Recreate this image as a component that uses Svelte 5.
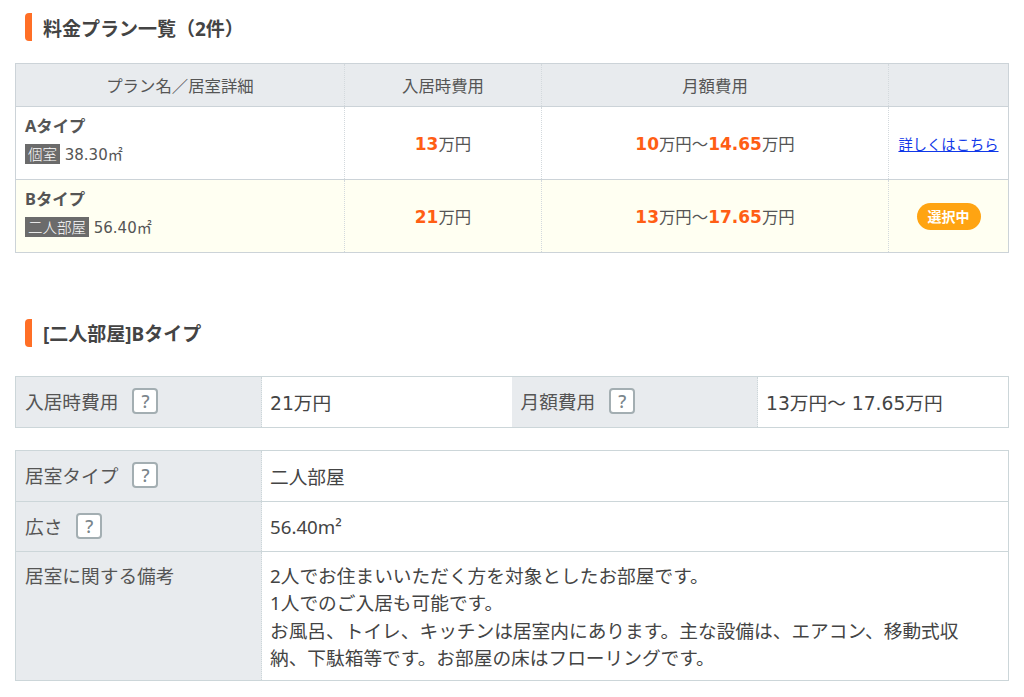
<script>
  const plans = [
    { name: 'Aタイプ', room: '個室', area: '38.30㎡', init: '13', lo: '10', hi: '14.65', sel: false },
    { name: 'Bタイプ', room: '二人部屋', area: '56.40㎡', init: '21', lo: '13', hi: '17.65', sel: true }
  ];
</script>

<main class="page">
  <h2 class="title first">料金プラン一覧（2件）</h2>
  <table class="plans">
    <colgroup><col class="c1" /><col class="c2" /><col class="c3" /><col /></colgroup>
    <thead>
      <tr><th>プラン名／居室詳細</th><th>入居時費用</th><th>月額費用</th><th></th></tr>
    </thead>
    <tbody>
      {#each plans as p}
        <tr class:sel={p.sel}>
          <td class="plan">
            <div class="pname">{p.name}</div>
            <div class="pinfo"><span class="tag">{p.room}</span> {p.area}</div>
          </td>
          <td class="mid"><b>{p.init}</b>万円</td>
          <td class="mid"><b>{p.lo}</b>万円〜<b>{p.hi}</b>万円</td>
          <td class="act">
            {#if p.sel}<span class="pill">選択中</span>{:else}<a href="#detail">詳しくはこちら</a>{/if}
          </td>
        </tr>
      {/each}
    </tbody>
  </table>

  <h2 class="title second">[二人部屋]Bタイプ</h2>

  <table class="spec costs">
    <colgroup><col class="k" /><col class="v" /><col class="k" /><col /></colgroup>
    <tbody>
      <tr>
        <th>入居時費用<span class="q">?</span></th><td class="num">21万円</td>
        <th>月額費用<span class="q">?</span></th><td class="num">13万円〜 17.65万円</td>
      </tr>
    </tbody>
  </table>

  <table class="spec details">
    <colgroup><col class="k" /><col /></colgroup>
    <tbody>
      <tr class="r1"><th>居室タイプ<span class="q">?</span></th><td>二人部屋</td></tr>
      <tr class="r2"><th>広さ<span class="q">?</span></th><td>56.40m²</td></tr>
      <tr class="notes">
        <th>居室に関する備考</th>
        <td>2人でお住まいいただく方を対象としたお部屋です。<br />1人でのご入居も可能です。<br />お風呂、トイレ、キッチンは居室内にあります。主な設備は、エアコン、移動式収納、下駄箱等です。お部屋の床はフローリングです。</td>
      </tr>
    </tbody>
  </table>
</main>

<style>
  :global(body) {
    margin: 0;
    background: #fff;
    color: #444;
    font-family: "Noto Sans", "Noto Sans CJK JP", sans-serif;
  }
  .page { padding: 0 15px; width: 994px; }
  .title {
    margin: 0;
    border-left: 7px solid #ff6f26;
    border-radius: 4px;
    padding-left: 11px;
    height: 28px;
    font-size: 19px;
    font-weight: 700;
    color: #444;
    margin-left: 10px;
  }
  .first { margin-top: 13px; margin-bottom: 22px; line-height: 32px; }
  .second { margin-top: 66px; margin-bottom: 29px; line-height: 30px; }
  table { border-collapse: collapse; table-layout: fixed; width: 994px; }
  .plans .c1 { width: 329px; }
  .plans .c2 { width: 197px; }
  .plans .c3 { width: 347px; }
  .plans { border: 1px solid #ccd3d8; font-size: 16.4px; }
  .plans th {
    height: 42px;
    padding: 0;
    background: #e8ebee;
    font-weight: 400;
    font-size: 16.4px;
    color: #555;
    border-bottom: 1px solid #ccd3d8;
    border-left: 1px dotted #d3d9dd;
  }
  .plans td {
    height: 72px;
    padding: 0;
    border-top: 1px solid #ccd3d8;
    border-left: 1px dotted #d3d9dd;
    text-align: center;
    color: #555;
  }
  .plans tr.sel td { background: #fffff2; }
  .plans td.plan { text-align: left; padding-left: 9px; }
  .pname { font-weight: 700; font-size: 16.4px; line-height: 20px; color: #555; margin-bottom: 8px; margin-top: -5px; }
  .pinfo { font-size: 15px; line-height: 22px; font-family: "DejaVu Sans", "Noto Sans CJK JP", sans-serif; }
  .tag { background: #6b6b6b; color: #fff; padding: 0 3px; font-size: 14.5px; line-height: 20px; display: inline-block; vertical-align: top; font-family: "Noto Sans CJK JP", sans-serif; font-weight: 300; }
  .mid b { color: #ff5e14; font-size: 17px; font-family: "DejaVu Sans", sans-serif; font-weight: 700; }
  .act a { color: #1038e8; font-size: 14.3px; }
  .pill {
    display: inline-block;
    background: #ffa412;
    color: #fff;
    font-weight: 700;
    font-size: 14px;
    line-height: 27px;
    width: 64px;
    border-radius: 14px;
  }
  .spec { border: 1px solid #ccd6d9; font-size: 18.7px; color: #444; }
  .spec .k { width: 246px; }
  .costs .v { width: 250px; }
  .costs { margin-bottom: 22px; }
  .spec th, .spec td {
    box-sizing: border-box;
    height: 51px;
    padding: 0 9px 1px 8px;
    font-weight: 400;
    text-align: left;
    border-top: 1px solid #ccd6d9;
  }
  .spec .r2 th, .spec .r2 td { height: 50px; }
  .spec th { padding-left: 9px; padding-bottom: 3px; background: #e8ebee; color: #555; font-size: 18.7px; border-right: 1px dotted #ccd6d9; }
  .num { font-family: "DejaVu Sans", "Noto Sans CJK JP", sans-serif; }
  .q {
    display: inline-block;
    box-sizing: border-box;
    width: 26px;
    height: 26px;
    line-height: 22px;
    margin-left: 14px;
    border: 2px solid #a3aeb2;
    border-radius: 4px;
    background: #fff;
    color: #7b868c;
    text-align: center;
    font-size: 18px;
    font-weight: 500;
    vertical-align: 1px;
  }
  .notes th { vertical-align: top; padding-top: 9px; }
  .notes td { line-height: 27.3px; padding: 10px 40px 9px 8px; }
</style>
